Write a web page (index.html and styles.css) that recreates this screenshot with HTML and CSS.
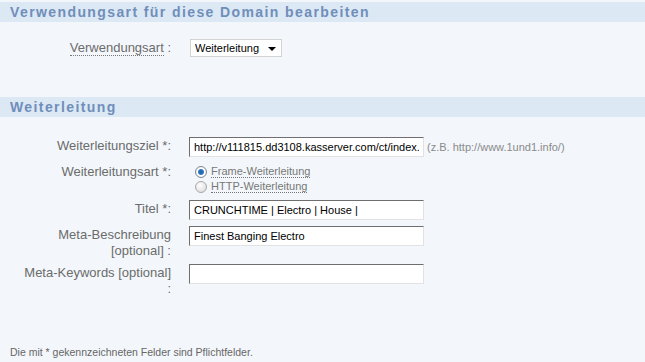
FILE: index.html
```html
<!DOCTYPE html>
<html>
  <head>
    <meta charset="utf-8">
    <title>Verwendungsart bearbeiten</title>
    <link rel="stylesheet" href="styles.css">
  </head>
  <body>
    <div class="page">
      <div class="section">
        <h2 class="section-title">Verwendungsart für diese Domain bearbeiten</h2>
        <div class="section-body first">
          <div class="usage-row">
            <label class="usage-label"><span class="dotted">Verwendungsart</span> :</label>
            <div class="select-wrap">
              <select class="select">
                <option>Weiterleitung</option>
              </select>
            </div>
          </div>
        </div>
      </div>

      <div class="section">
        <h2 class="section-title">Weiterleitung</h2>
        <div class="section-body">
          <div class="form">
            <label class="label">Weiterleitungsziel *:</label>
            <div class="field">
              <input class="input" type="text" value="http://v111815.dd3108.kasserver.com/ct/index.html">
              <span class="hint">(z.B. http://www.1und1.info/)</span>
            </div>

            <label class="label">Weiterleitungsart *:</label>
            <div class="field radios">
              <label class="radio-line"><input class="radio" type="radio" name="art" checked><span class="dotted">Frame-Weiterleitung</span></label>
              <label class="radio-line"><input class="radio" type="radio" name="art"><span class="dotted">HTTP-Weiterleitung</span></label>
            </div>

            <label class="label">Titel *:</label>
            <div class="field">
              <input class="input" type="text" value="CRUNCHTIME | Electro | House |">
            </div>

            <label class="label">Meta-Beschreibung [optional] :</label>
            <div class="field">
              <input class="input" type="text" value="Finest Banging Electro">
            </div>

            <label class="label">Meta-Keywords [optional] :</label>
            <div class="field">
              <input class="input" type="text" value="">
            </div>
          </div>
        </div>
      </div>

      <p class="note">Die mit * gekennzeichneten Felder sind Pflichtfelder.</p>
    </div>
  </body>
</html>
```

FILE: styles.css
```css
html, body {
  margin: 0;
  padding: 0;
  background-color: #f3f7fb;
}
body {
  font-family: "Liberation Sans", Arial, sans-serif;
  font-size: 13px;
  color: #6b6b6b;
}
.page {
  padding-top: 2px;
  height: 360px;
  overflow: hidden;
}
.section-title {
  margin: 0;
  height: 20px;
  line-height: 20px;
  padding-left: 10px;
  font-size: 14px;
  font-weight: bold;
  letter-spacing: 1.4px;
  color: #6f8eba;
  background-color: #dce8f4;
}
.section-body {
  padding: 20px 0 14px 20px;
}
.section-body.first {
  padding: 17px 0 40px 10px;
}
.dotted {
  border-bottom: 1px dotted #777;
}
.usage-row {
  display: flex;
  align-items: center;
}
.usage-label {
  width: 161px;
  text-align: right;
  line-height: 16px;
  margin-right: 19px;
}
.select-wrap {
  position: relative;
  width: 92px;
  height: 18px;
}
.select {
  appearance: none;
  -webkit-appearance: none;
  width: 92px;
  height: 18px;
  margin: 0;
  padding: 0 0 0 4px;
  border: 1px solid #d4d4d4;
  border-radius: 0;
  background-color: #fff;
  font-family: "Liberation Sans", Arial, sans-serif;
  font-size: 11px;
  color: #000;
}
.select-wrap::after {
  content: "";
  position: absolute;
  right: 6px;
  top: 8px;
  border-left: 4px solid transparent;
  border-right: 4px solid transparent;
  border-top: 4px solid #000;
}
.form {
  display: grid;
  grid-template-columns: 151px auto;
  column-gap: 18px;
  row-gap: 6px;
  align-items: start;
}
.label {
  text-align: right;
  line-height: 16px;
  padding-top: 1px;
  margin-bottom: -1px;
}
.field {
  display: flex;
  align-items: center;
}
.input {
  box-sizing: border-box;
  width: 235px;
  height: 20px;
  margin: 0;
  padding: 0 4px;
  border: 1px solid;
  border-color: #6e6e6e #e2e2e2 #e2e2e2 #6e6e6e;
  background-color: #fff;
  font-family: "Liberation Sans", Arial, sans-serif;
  font-size: 11px;
  color: #000;
}
.hint {
  margin-left: 3px;
  font-size: 11px;
  color: #8a8a8a;
}
.radios {
  flex-direction: column;
  align-items: flex-start;
  padding-top: 1px;
}
.radio-line {
  display: flex;
  align-items: center;
  height: 15px;
  font-size: 11px;
  color: #777;
}
.radio {
  appearance: none;
  -webkit-appearance: none;
  box-sizing: border-box;
  width: 12px;
  height: 12px;
  margin: 0 4px 0 6px;
  border: 1px solid #a8a8a8;
  border-radius: 50%;
  background: radial-gradient(circle at 40% 35%, #fff, #d6d6d6);
}
.radio:checked {
  border-color: #7e8a96;
  background: radial-gradient(circle, #1e5d9e 0, #2f7ac4 2.5px, #fff 3.5px, #e4e4e4 6px);
}
.note {
  margin: 36px 0 0 10px;
  font-size: 10.5px;
  color: #666;
}
```
